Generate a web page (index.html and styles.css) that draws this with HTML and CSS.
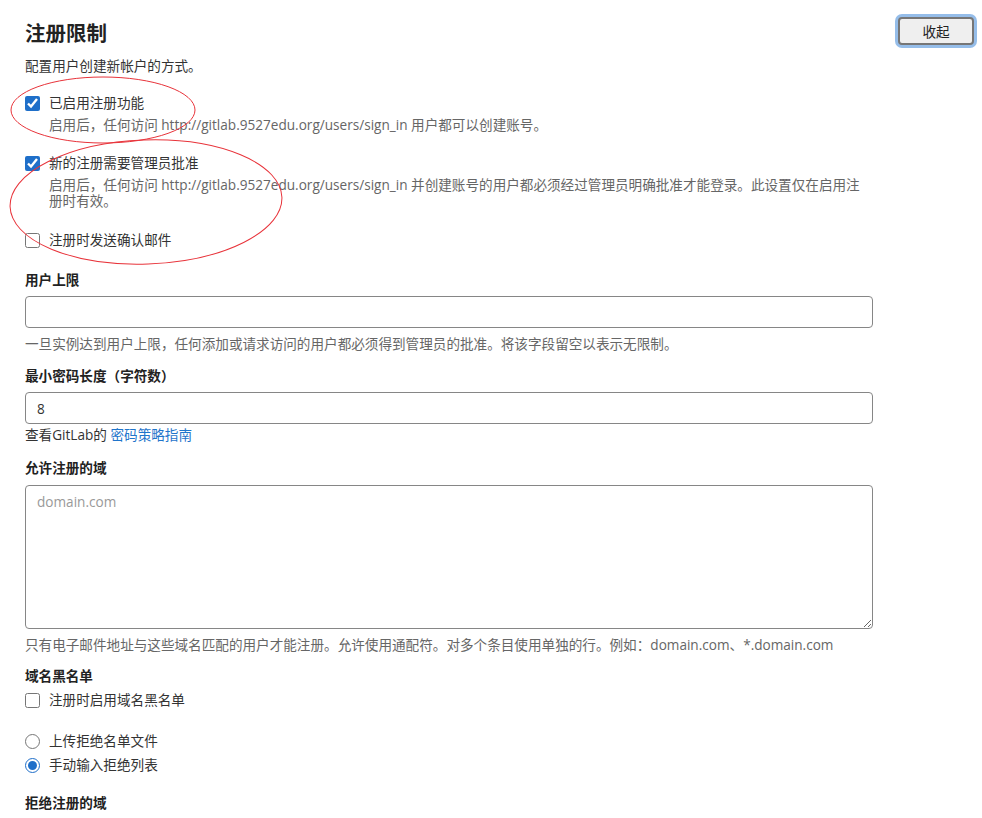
FILE: index.html
```html
<!DOCTYPE html>
<html lang="zh-CN">
<head>
  <meta charset="UTF-8" />
  <meta name="viewport" content="width=device-width, initial-scale=1.0" />
  <title>注册限制</title>
  <link rel="stylesheet" href="styles.css">
</head>
<body>
  <div class="page">
    <div class="settings">
      <h2 class="title">注册限制</h2>
      <p class="desc">配置用户创建新帐户的方式。</p>

      <div class="check-block first">
        <label class="check"><input type="checkbox" checked> 已启用注册功能</label>
        <div class="help indent">启用后，任何访问 http://gitlab.9527edu.org/users/sign_in 用户都可以创建账号。</div>
      </div>

      <div class="check-block second">
        <label class="check"><input type="checkbox" checked> 新的注册需要管理员批准</label>
        <div class="help indent multi">启用后，任何访问 http://gitlab.9527edu.org/users/sign_in 并创建账号的用户都必须经过管理员明确批准才能登录。此设置仅在启用注册时有效。</div>
      </div>

      <div class="check-block third">
        <label class="check"><input type="checkbox"> 注册时发送确认邮件</label>
      </div>

      <div class="field user-cap">
        <label class="field-label" for="user-cap">用户上限</label>
        <input class="text-input" id="user-cap" type="text">
        <div class="help below">一旦实例达到用户上限，任何添加或请求访问的用户都必须得到管理员的批准。将该字段留空以表示无限制。</div>
      </div>

      <div class="field pw-len">
        <label class="field-label" for="pw-len">最小密码长度（字符数）</label>
        <input class="text-input" id="pw-len" type="text" value="8">
        <div class="note">查看GitLab的 <a href="#">密码策略指南</a></div>
      </div>

      <div class="field domains">
        <label class="field-label" for="allowed">允许注册的域</label>
        <textarea class="text-area" id="allowed" placeholder="domain.com"></textarea>
        <div class="help below">只有电子邮件地址与这些域名匹配的用户才能注册。允许使用通配符。对多个条目使用单独的行。例如：domain.com、*.domain.com</div>
      </div>

      <div class="field blacklist">
        <div class="field-label">域名黑名单</div>
        <label class="check bl-check"><input type="checkbox"> 注册时启用域名黑名单</label>
        <div class="radios">
          <label class="check"><input type="radio" name="deny"> 上传拒绝名单文件</label>
          <label class="check"><input type="radio" name="deny" checked> 手动输入拒绝列表</label>
        </div>
      </div>

      <div class="field-label deny-label">拒绝注册的域</div>
    </div>

    <div class="actions">
      <button class="collapse-button">收起</button>
    </div>
  </div>

  <svg class="marks" width="982" height="818" viewBox="0 0 982 818">
    <ellipse cx="103" cy="110" rx="92" ry="33" />
    <ellipse cx="146" cy="202" rx="136" ry="62" transform="rotate(-2 146 202)" />
  </svg>
</body>
</html>
```

FILE: styles.css
```css
* { box-sizing: border-box; }
body {
  margin: 0;
  font-family: "Open Sans", "Noto Sans CJK SC", sans-serif;
  font-size: 13.6px;
  color: #333;
  background: #fff;
}
.page {
  display: flex;
  gap: 25px;
  padding: 15px 0 0 25px;
}
.settings {
  width: 848px;
  display: flex;
  flex-direction: column;
}
.title {
  margin: 4px 0 0;
  font-size: 20.5px;
  line-height: 28px;
  font-weight: 700;
  color: #222;
}
.desc {
  margin: 9px 0 0;
  line-height: 20px;
}
.check {
  display: flex;
  align-items: center;
  gap: 9px;
  line-height: 20px;
}
.check input {
  margin: 0;
  width: 15px;
  height: 15px;
  accent-color: #1f6fc9;
}
.help {
  color: #666;
  line-height: 20px;
}
.indent {
  padding-left: 24px;
  margin-top: 2px;
}
.help.multi {
  line-height: 16px;
  margin-top: 4px;
}
.check-block.first { margin-top: 17px; }
.check-block.second { margin-top: 18px; }
.check-block.third { margin-top: 21px; }
.field { display: flex; flex-direction: column; }
.field-label {
  font-weight: 700;
  line-height: 20px;
  color: #222;
}
.user-cap { margin-top: 20px; }
.pw-len { margin-top: 12px; }
.domains { margin-top: 13px; }
.blacklist { margin-top: 11px; }
.text-input {
  margin-top: 6px;
  height: 32px;
  width: 100%;
  border: 1px solid #868686;
  border-radius: 4px;
  padding: 0 11px;
  font: inherit;
  color: #333;
}
.text-area {
  margin-top: 7px;
  height: 144px;
  width: 100%;
  border: 1px solid #868686;
  border-radius: 4px;
  padding: 6px 11px;
  font: inherit;
  line-height: 20px;
}
.text-area::placeholder { color: #999; }
.help.below { margin-top: 6px; }
.note {
  margin-top: 1px;
  line-height: 20px;
}
.note a {
  color: #1f75cb;
  text-decoration: none;
}
.bl-check { margin-top: 4px; }
.radios {
  margin-top: 21px;
  display: flex;
  flex-direction: column;
  gap: 4px;
}
.deny-label { margin-top: 18px; }
.actions { padding-top: 2px; }
.collapse-button {
  width: 76px;
  height: 28px;
  font: inherit;
  font-size: 13.6px;
  color: #222;
  background: #efefef;
  border: 2px solid #767676;
  border-radius: 4px;
  box-shadow: 0 0 0 3px #95bde9;
  cursor: pointer;
}
.marks {
  position: absolute;
  left: 0;
  top: 0;
  pointer-events: none;
}
.marks ellipse {
  fill: none;
  stroke: #e8333a;
  stroke-width: 1;
}
```
